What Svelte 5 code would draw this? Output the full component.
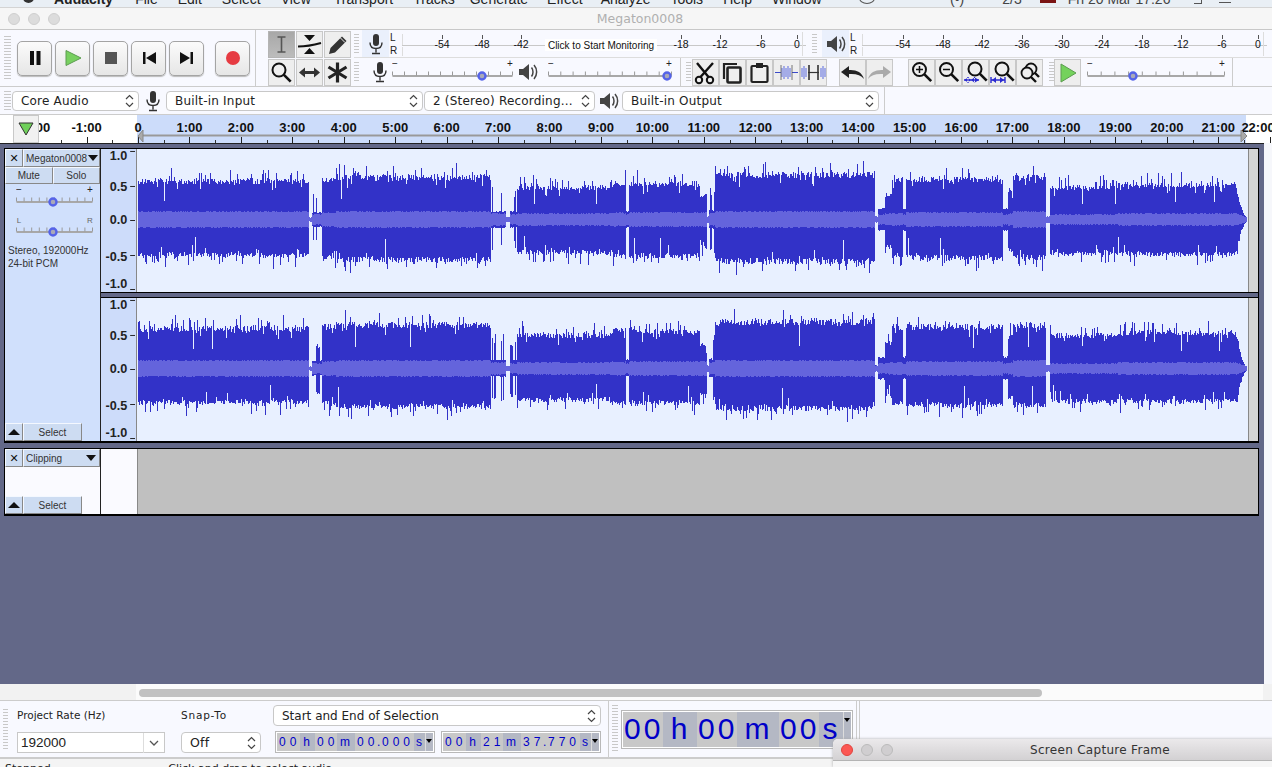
<script lang="ts">
  // seeded so the waveform stays the same between renders
  function rng(seed: number) {
    return () => {
      seed = (seed + 0x6d2b79f5) | 0;
      let t = Math.imul(seed ^ (seed >>> 15), 1 | seed);
      t = (t + Math.imul(t ^ (t >>> 7), 61 | t)) ^ t;
      return ((t ^ (t >>> 14)) >>> 0) / 4294967296;
    };
  }

  // x0, x1, top, bottom, rms, spike
  const segments = [
    [138, 309, 42, 39, 8, 0],
    [309, 312, 1, 1, 2, 0],
    [312, 322, 8, 8, 5, 28],
    [322, 336, 44, 41, 7, 0],
    [336, 491, 46, 44, 8, 0],
    [491, 506, 9, 9, 6, 35],
    [506, 510, 2, 2, 2.5, 0],
    [510, 517, 9, 9, 5, 30],
    [517, 610, 35, 36, 6, 0],
    [610, 626, 40, 40, 6.5, 0],
    [626, 629, 9, 9, 5, 0],
    [629, 700, 39, 40, 7, 0],
    [700, 707, 26, 30, 7, 0],
    [707, 709, 3, 3, 3, 0],
    [709, 715, 10, 10, 6, 35],
    [715, 875, 49, 46, 8, 0],
    [875, 878, 3, 3, 3, 0],
    [878, 885, 12, 12, 5, 0],
    [885, 892, 27, 30, 5.5, 0],
    [892, 903, 44, 40, 6, 0],
    [903, 906, 12, 12, 5, 0],
    [906, 1003, 44, 42, 7, 0],
    [1003, 1008, 12, 12, 5, 0],
    [1008, 1013, 33, 33, 6, 0],
    [1013, 1046, 46, 42, 8, 0],
    [1046, 1050, 3, 3, 3, 0],
    [1050, 1118, 35, 38, 5, 0],
    [1118, 1236, 38, 38, 6, 0]
  ];

  function buildWave(seed: number, topScale: number, botScale: number) {
    const r = rng(seed);
    const c = 70.5;
    let dark = "";
    let light = "";
    const col = (x: number, top: number, bot: number, rms: number) => {
      const px = x - 137 + 0.5;
      dark += `M${px} ${(c - top).toFixed(0)}V${(c + bot).toFixed(0)}`;
      const a = rms * (0.9 + r() * 0.2);
      const b = rms * (0.9 + r() * 0.2);
      light += `M${px} ${(c - a).toFixed(0)}V${(c + b).toFixed(0)}`;
    };
    const jitter = (amp: number) => {
      let v = amp * (0.84 + r() * 0.14);
      const p = r();
      if (amp > 20) {
        if (p < 0.16) v += r() * 12;
        else if (p < 0.24) v -= r() * 9;
        else if (p < 0.246) v = amp * 0.45;
      }
      return v;
    };
    for (const [x0, x1, top, bot, rms, spike] of segments) {
      for (let x = x0; x < x1; x++) {
        let t = jitter(top * topScale);
        let b = jitter(bot * botScale);
        if (spike && r() < 0.3) {
          t = spike * (0.7 + r() * 0.3);
          b = spike * (0.7 + r() * 0.3);
        }
        col(x, t, b, rms);
      }
    }
    for (let x = 1236; x < 1247; x++) {
      const k = (1247 - x) / 11;
      col(x, 36 * k * k * (0.8 + r() * 0.3) + 2, 36 * k * k * (0.8 + r() * 0.3) + 2, 2 + 4 * k);
    }
    return { dark, light };
  }

  const ch1 = buildWave(11, 1, 1);
  const ch2 = buildWave(47, 1.04, 0.95);

  const scale = [
    { t: "1.0", y: 9, tick: 0 },
    { t: "0.5", y: 41, tick: 36 },
    { t: "0.0", y: 75, tick: 71 },
    { t: "-0.5", y: 113, tick: 107 },
    { t: "-1.0", y: 141, tick: 142 }
  ];

  // timeline: 51.44px a minute, zero at x=138
  const minutes = Array.from({ length: 25 }, (_, i) => i - 2);
  const mx = (m: number) => 138 + m * 51.44;
  const labelX = (m: number) => (m === 22 ? 1258 : mx(m));
  const label = (m: number) => (m < 0 ? `-${-m}:00` : m === 0 ? "0" : `${m}:00`);

  const recLabels = [
    ["-54", 442], ["-48", 482], ["-42", 521], ["-18", 681], ["-12", 720], ["-6", 761], ["0", 797]
  ] as [string, number][];
  const playLabels = [
    ["-54", 903], ["-48", 943], ["-42", 982], ["-36", 1022], ["-30", 1062],
    ["-24", 1102], ["-18", 1142], ["-12", 1181], ["-6", 1222], ["0", 1258]
  ] as [string, number][];

  const smallStart = [
    ["00", 23, 1], ["h", 15, 0], ["00", 22, 1], ["m", 18, 0], ["00", 22, 1], [".", 3, 0], ["000", 34, 1], ["s", 11, 0]
  ] as [string, number, number][];
  const smallEnd = [
    ["00", 23, 1], ["h", 15, 0], ["21", 22, 1], ["m", 18, 0], ["37", 22, 1], [".", 3, 0], ["770", 34, 1], ["s", 11, 0]
  ] as [string, number, number][];
  const bigTime = [
    ["00", 40, 1], ["h", 34, 0], ["00", 40, 1], ["m", 42, 0], ["00", 40, 1], ["s", 24, 0]
  ] as [string, number, number][];

  const menus = [
    ["File", 22], ["Edit", 20], ["Select", 20], ["View", 20], ["Transport", 23], ["Tracks", 20],
    ["Generate", 15], ["Effect", 19], ["Analyze", 18], ["Tools", 20], ["Help", 20], ["Window", 20]
  ] as [string, number][];

  const lens = (cx: number, cy: number, r: number) =>
    `<circle cx="${cx}" cy="${cy}" r="${r}" fill="none" stroke="#111" stroke-width="2"/><path d="M${cx + r * 0.72} ${cy + r * 0.72}l7 7" stroke="#111" stroke-width="2.6"/>`;

  const icons: Record<string, string> = {
    ibeam: `<path d="M9.5 6h8M13.5 6v15M9.5 21h8" fill="none" stroke="#555" stroke-width="1.6"/>`,
    envelope: `<path d="M8 4h11l-5.500 6zM8 23h11l-5.500-6z" fill="#111"/><path d="M2 15.500c6 0 14-1 23-3.500" fill="none" stroke="#111" stroke-width="2"/>`,
    pencil: `<path d="M5 23l1.500-6L18 5.500l4.500 4.500L11 21.500z" fill="#333"/><path d="M16.500 7l4.500 4.500" stroke="#eee" stroke-width="1"/>`,
    zoom: lens(11, 11, 6.5),
    shift: `<path d="M3 13.500l6-5v3.500h9V8.500l6 5-6 5V15H9v3.500z" fill="#333"/>`,
    multi: `<path d="M13.500 3.500v20M4.500 8l18 11M22.500 8l-18 11" stroke="#222" stroke-width="3.200"/>`,
    scissors: `<circle cx="7" cy="21" r="3.200" fill="none" stroke="#111" stroke-width="2"/><circle cx="18" cy="21" r="3.200" fill="none" stroke="#111" stroke-width="2"/><path d="M8.500 18L21 4M16.500 18L5 4" stroke="#111" stroke-width="2.400"/>`,
    copy: `<path d="M18 5H5v15" fill="none" stroke="#222" stroke-width="2.200"/><rect x="8.500" y="8.500" width="13" height="15" rx="1" fill="none" stroke="#222" stroke-width="2.600"/>`,
    paste: `<rect x="5.500" y="7" width="16" height="16" rx="1" fill="none" stroke="#222" stroke-width="2.200"/><rect x="10" y="4" width="7" height="5" fill="#222"/>`,
    trim: `<path d="M2 13.500h6M19 13.500h6" stroke="#3a4ac8" stroke-width="1.200"/><path d="M9 9v9M11 7v13M13 9v9M15 7v13M17 9v9" stroke="#5a6ae0" stroke-width="1"/><path d="M8 6v15M19 6v15" stroke="#555" stroke-width=".8"/>`,
    silence: `<path d="M2 9v9M4 7v13M6 9v9M21 9v9M23 7v13M25 9v9" stroke="#5a6ae0" stroke-width="1"/><path d="M8 13.500h11" stroke="#333" stroke-width="1.200"/><path d="M9 6v15M18 6v15" stroke="#333" stroke-width="1.600"/>`,
    undo: `<path d="M2 13l8-6v4c7-.5 13 2 15 9-3-4-8-5.500-15-5v4z" fill="#222"/>`,
    redo: `<path d="M25 13l-8-6v4c-7-.5-13 2-15 9 3-4 8-5.500 15-5v4z" fill="#aaa"/>`,
    zoomIn: lens(11.5, 10.5, 6.5) + `<path d="M8 10.500h7M11.500 7v7" stroke="#111" stroke-width="1.500"/>`,
    zoomOut: lens(11.5, 10.5, 6.5) + `<path d="M8 10.500h7" stroke="#111" stroke-width="1.500"/>`,
    zoomFit: lens(13, 10, 6.5) + `<path d="M2 21h15" stroke="#2a2ad0" stroke-width="1.400"/><path d="M2 21l5-3v6zM9 21l-4-3v6zM9 21l4-3v6zM17 21l-5-3v6z" fill="#2a2ad0"/>`,
    zoomSel: lens(13, 10, 6.5) + `<path d="M2 21h14M2 18v6M16 18v6" stroke="#2a2ad0" stroke-width="1.400"/><path d="M3 21l4-3v6zM15 21l-4-3v6z" fill="#2a2ad0"/>`,
    zoomToggle: `<circle cx="15" cy="10" r="5.500" fill="none" stroke="#111" stroke-width="1.800"/><circle cx="11" cy="14" r="5.500" fill="#eee" stroke="#111" stroke-width="1.800"/><path d="M15 18l5 5M19 14l4 4" stroke="#111" stroke-width="2.400"/>`,
    playGreen: `<path d="M7 5l15 9-15 9z" fill="#74d25c" stroke="#5c9c50"/>`
  };
</script>

{#snippet mic(fill = "#333")}
  <svg class="mic" width="16" height="22" viewBox="0 0 16 22">
    <rect x="5" y="1" width="6" height="12" rx="3" fill={fill} />
    <path d="M2 9.500c0 4 2.500 6 6 6s6-2 6-6M8 15.500v4M4 20.500h8" fill="none" stroke={fill} stroke-width="1.400" />
  </svg>
{/snippet}

{#snippet speaker()}
  <svg class="spk" width="20" height="20" viewBox="0 0 20 20">
    <path d="M1 7h4l6-5v16l-6-5H1z" fill="#444" />
    <path d="M13.500 5.500c2 2.500 2 6.500 0 9M16 3c3.500 4 3.500 10 0 14" fill="none" stroke="#444" stroke-width="1.500" />
  </svg>
{/snippet}

{#snippet grip()}
  <span class="grip"></span>
{/snippet}

{#snippet tool(name: string, on = false)}
  <span class="tool" class:on>
    <svg width="25" height="25" viewBox="1 1 25 25">{@html icons[name]}</svg>
  </span>
{/snippet}

{#snippet slider(w: number, pos: number, lo: string, hi: string, dim = false)}
  <svg class="slider" width={w} height="22" viewBox="0 0 {w} 22">
    <text class:dim x="3" y="7" class="sl-mark" text-anchor="middle">{lo}</text>
    <text class:dim x={w - 3} y="7" class="sl-mark" text-anchor="middle">{hi}</text>
    <path d="M0.500 16h{w - 1}" stroke="#a8a8a8" stroke-width="2" />
    {#each Array.from({ length: 11 }, (_, i) => i) as i}
      <path d="M{0.5 + (i * (w - 1)) / 10} 11.500v4" stroke="#999" />
    {/each}
    <circle cx={pos} cy="16" r="3.500" fill="#a9a9b8" stroke="#5563e8" stroke-width="2.400" />
  </svg>
{/snippet}

{#snippet meter(x0: number, width: number, labels: [string, number][], hint: boolean)}
  <svg class="meter" {width} height="28" viewBox="{x0} 30 {width} 28">
    <path d="M{x0} 45.500h{width}" stroke="#c8c8c8" />
    <path d="M{x0 + 0.5} 34v11M{x0 + 0.5} 47v9" stroke="#ddd" />
    <path d="M{x0 + width - 3.500} 32v24" stroke="#ddd" />
    {#each labels as [t, x]}
      <path d="M{x + 0.5} 35v4" stroke="#555" />
      <text {x} y="48" class="meter-label" text-anchor="middle">{t}</text>
    {/each}
    {#if hint}
      <rect x="545" y="39" width="112" height="12" fill="#fff" />
      <text x="601" y="48.500" class="meter-hint" text-anchor="middle">Click to Start Monitoring</text>
    {/if}
  </svg>
{/snippet}

{#snippet timeField(cells: [string, number, number][], big: boolean)}
  <div class="time" class:big>
    {#each cells as [t, w, lit]}
      <span class="cell" class:lit class:dot={t === "."} style="width:{w}px">{t}</span>
    {/each}
    <span class="time-arrow"><i></i></span>
  </div>
{/snippet}

{#snippet combo(text: string, cls: string)}
  <div class="combo {cls}">
    <span>{text}</span>
    <svg width="9" height="14" viewBox="0 0 9 14"><path d="M1 5l3.500-3.500L8 5M1 9l3.500 3.500L8 9" fill="none" stroke="#444" stroke-width="1.200" /></svg>
  </div>
{/snippet}

{#snippet panelFoot()}
  <div class="panel-foot">
    <span class="pbtn sq"><i class="up"></i></span>
    <span class="pbtn select">Select</span>
  </div>
{/snippet}

{#snippet channel(wave: { dark: string; light: string }, cls: string)}
  <div class="channel {cls}">
    <svg class="vruler" width="36" height="143" viewBox="0 0 36 143">
      {#each scale as s}
        <text x="27" y={s.y} class="vr-label" text-anchor="end">{s.t}</text>
        <path d="M30 {s.tick + 0.5}h5" stroke="#222" />
      {/each}
    </svg>
    <svg class="wave" width="1111" height="143" viewBox="0 0 1111 143" shape-rendering="crispEdges">
      <path d={wave.dark} stroke="#3232c8" fill="none" />
      <path d={wave.light} stroke="#6464dc" fill="none" />
    </svg>
    <div class="strip"></div>
  </div>
{/snippet}

<div class="app">
  <div class="menubar">
    <span class="apple"></span>
    <b>Audacity</b>
    {#each menus as [m, gap]}
      <span style="margin-left:{gap}px">{m}</span>
    {/each}
    <span class="menu-right">
      <i class="clock"></i>
      <span class="m-vol">(•)</span>
      <span class="m-bat">2/3</span>
      <i class="flag"></i>
      <span class="m-date">Fri 20 Mar 17:26</span>
      <i class="m-search"></i>
      <i class="m-list"></i>
    </span>
  </div>

  <div class="titlebar">
    <span class="light"></span><span class="light"></span><span class="light"></span>
    <span class="title">Megaton0008</span>
  </div>

  <div class="toolbars">
    <div class="transport">
      {@render grip()}
      <div class="tbtn"><svg width="20" height="20" viewBox="0 0 20 20"><path d="M5 3h4v14H5zM11.500 3h4v14h-4z" fill="#111" /></svg></div>
      <div class="tbtn"><svg width="20" height="20" viewBox="0 0 20 20"><path d="M3 2.500l15 7.500-15 7.500z" fill="#78d060" stroke="#5c9c50" /></svg></div>
      <div class="tbtn"><svg width="20" height="20" viewBox="0 0 20 20"><rect x="4" y="4" width="12" height="12" fill="#555" /></svg></div>
      <div class="tbtn"><svg width="20" height="20" viewBox="0 0 20 20"><path d="M4 4h2.500v12H4zM17 4v12L7 10z" fill="#111" /></svg></div>
      <div class="tbtn"><svg width="20" height="20" viewBox="0 0 20 20"><path d="M3 4l10 6-10 6zM13.500 4H16v12h-2.500z" fill="#111" /></svg></div>
      <div class="tbtn rec"><svg width="20" height="20" viewBox="0 0 20 20"><circle cx="10" cy="10" r="7" fill="#e63b42" /></svg></div>
    </div>

    <div class="tools">
      {@render tool("ibeam", true)}
      {@render tool("envelope")}
      {@render tool("pencil")}
      {@render tool("zoom")}
      {@render tool("shift")}
      {@render tool("multi")}
    </div>

    <div class="bars">
      <div class="bar-row top">
        {@render grip()}
        <span class="meter-btn on">{@render mic()}</span>
        <span class="lr"><b>L</b><b>R</b></span>
        {@render meter(402, 404, recLabels, true)}
        {@render grip()}
        <span class="meter-btn second">{@render speaker()}</span>
        <span class="lr"><b>L</b><b>R</b></span>
        {@render meter(862, 405, playLabels, false)}
      </div>
      <div class="bar-row">
        {@render grip()}
        <span class="mix-icon">{@render mic()}</span>
        <span class="sl-a">{@render slider(121, 90, "−", "+")}</span>
        <span class="mix-icon spk-gap">{@render speaker()}</span>
        <span class="sl-b">{@render slider(124, 119, "−", "+")}</span>
        <span class="sep"></span>
        {@render grip()}
        <div class="group">
          {@render tool("scissors")}
          {@render tool("copy")}
          {@render tool("paste")}
          {@render tool("trim")}
          {@render tool("silence")}
        </div>
        <div class="group undo">
          {@render tool("undo")}
          {@render tool("redo")}
        </div>
        <div class="group zooms">
          {@render tool("zoomIn")}
          {@render tool("zoomOut")}
          {@render tool("zoomFit")}
          {@render tool("zoomSel")}
          {@render tool("zoomToggle")}
        </div>
        {@render grip()}
        {@render tool("playGreen")}
        <span class="sl-c">{@render slider(138, 46, "−", "+")}</span>
        <span class="sep end"></span>
      </div>
    </div>
  </div>

  <div class="devices">
    {@render grip()}
    {@render combo("Core Audio", "host")}
    <span class="dev-icon">{@render mic()}</span>
    {@render combo("Built-in Input", "input")}
    {@render combo("2 (Stereo) Recording...", "chans")}
    <span class="dev-icon">{@render speaker()}</span>
    {@render combo("Built-in Output", "output")}
    <span class="sep dev-end"></span>
  </div>

  <div class="timeline">
    <svg width="1272" height="28" viewBox="0 0 1272 28">
      <rect x="137" y="0" width="1109" height="28" fill="#ccdcfa" />
      {#each minutes as m}
        <text x={labelX(m)} y="17" class="tl-label" text-anchor="middle">{label(m)}</text>
        <path d="M{Math.round(mx(m)) + 0.5} 22v6" stroke="#222" />
        <path d="M{Math.round(mx(m) + 25.7) + 0.5} 25v3" stroke="#333" />
      {/each}
      <path d="M142 20.500h1100" stroke="#999" stroke-width="2" />
      <path d="M143 15v12l-5-6zM1241 15v12l6-6z" fill="#aaa" stroke="#888" />
    </svg>
    <span class="pin">
      <svg width="16" height="14" viewBox="0 0 16 14"><path d="M1 1h14L8 13z" fill="#6fd05a" stroke="#333" /></svg>
    </span>
  </div>

  <div class="tracks">
    <div class="track audio">
      <div class="panel">
        <div class="panel-head">
          <span class="pbtn sq x">✕</span>
          <span class="pbtn name"><span>Megaton0008</span><i></i></span>
        </div>
        <div class="panel-head ms">
          <span class="pbtn half">Mute</span>
          <span class="pbtn half">Solo</span>
        </div>
        <div class="pslider first">{@render slider(77, 37, "−", "+")}</div>
        <div class="pslider">{@render slider(77, 37, "L", "R", true)}</div>
        <p class="info">Stereo, 192000Hz<br />24-bit PCM</p>
        {@render panelFoot()}
      </div>
      <div class="channels">
        {@render channel(ch1, "ch-a")}
        <div class="gap"></div>
        {@render channel(ch2, "ch-b")}
      </div>
    </div>

    <div class="track label">
      <div class="panel">
        <div class="panel-head">
          <span class="pbtn sq x">✕</span>
          <span class="pbtn name wide"><span>Clipping</span><i></i></span>
        </div>
        {@render panelFoot()}
      </div>
      <div class="label-ruler"></div>
      <div class="label-body"></div>
    </div>
  </div>

  <div class="hscroll">
    <div class="hs-track"><span class="thumb"></span></div>
  </div>

  <div class="selection">
    {@render grip()}
    <div class="rate">
      <label for="rate">Project Rate (Hz)</label>
      <div class="rate-box" id="rate">
        <span>192000</span>
        <svg width="20" height="20" viewBox="0 0 20 20"><path d="M6 8l4 4 4-4" fill="none" stroke="#555" stroke-width="1.300" /></svg>
      </div>
    </div>
    <div class="snap">
      <span class="snap-label">Snap-To</span>
      {@render combo("Off", "snap-box")}
    </div>
    <div class="sel-fields">
      {@render combo("Start and End of Selection", "sel-mode")}
      <div class="sel-times">
        {@render timeField(smallStart, false)}
        {@render timeField(smallEnd, false)}
      </div>
    </div>
    <span class="sep sel-sep"></span>
    {@render grip()}
    {@render timeField(bigTime, true)}
    <span class="sep sel-sep2"></span>
    <span class="sep sel-sep3"></span>
  </div>

  <div class="status">
    <span>Stopped.</span>
    <span class="hint">Click and drag to select audio</span>
  </div>

  <div class="capture">
    <div class="capture-bar">
      <span class="light red"></span><span class="light"></span><span class="light"></span>
      <span class="capture-title">Screen Capture Frame</span>
    </div>
  </div>
</div>

<style>
  :global(body) {
    margin: 0;
    background: #f6f7fb;
  }

  .app {
    position: relative;
    width: 1272px;
    height: 767px;
    overflow: hidden;
    font-family: "DejaVu Sans", sans-serif;
    color: #222;
  }

  .grip {
    flex: none;
    width: 7px;
    height: 20px;
    margin: 0 4px;
    background: repeating-linear-gradient(to bottom, #c8c8c8 0 1px, transparent 1px 3px);
  }

  .sep {
    flex: none;
    width: 1px;
    align-self: stretch;
    background: #ccc;
  }

  /* menu bar, only the bottom of the letters is on screen */
  .menubar {
    height: 7px;
    padding-left: 54px;
    display: flex;
    align-items: flex-end;
    background: #e9eff5;
    font: 14px/14px "Liberation Sans", sans-serif;
    color: #222;
    overflow: hidden;
    white-space: nowrap;
  }

  .menubar b,
  .menubar span {
    position: relative;
    top: -1px;
    flex: none;
  }

  .apple {
    position: absolute !important;
    left: 23px;
    top: -7px !important;
    width: 11px;
    height: 10px;
    border-radius: 50%;
    background: #333;
  }

  .menu-right {
    position: absolute !important;
    left: 859px;
    top: -8px !important;
    display: flex;
    align-items: flex-start;
    color: #444;
  }

  .menu-right span {
    top: 0;
  }

  .clock {
    width: 16px;
    height: 12px;
    border: 1.500px solid #555;
    border-radius: 50%;
    box-sizing: border-box;
  }

  .m-vol {
    margin-left: 75px;
  }

  .m-bat {
    margin-left: 38px;
  }

  .flag {
    width: 16px;
    height: 3px;
    margin: 8px 0 0 18px;
    background: #7a1414;
  }

  .m-date {
    margin-left: 12px;
  }

  .m-search {
    width: 8px;
    height: 12px;
    margin-left: 24px;
    border-right: 1.500px solid #555;
    border-bottom: 1.500px solid #555;
    box-sizing: border-box;
  }

  .m-list {
    width: 12px;
    height: 11px;
    margin-left: 17px;
    border-bottom: 1.500px solid #555;
    box-sizing: border-box;
  }

  .titlebar {
    height: 23px;
    box-sizing: border-box;
    display: flex;
    align-items: center;
    gap: 8px;
    padding-left: 8px;
    background: #f6f6f6;
    border-top: 1px solid #d4d4d4;
    border-bottom: 1px solid #c8c8c8;
    position: relative;
  }

  .light {
    width: 12px;
    height: 12px;
    border-radius: 50%;
    background: #dcdcdc;
    border: 0.5px solid #cfcfcf;
    box-sizing: border-box;
  }

  .title {
    position: absolute;
    left: 8px;
    right: 0;
    text-align: center;
    font-size: 12.500px;
    color: #b0b0b0;
  }

  .toolbars {
    height: 56px;
    display: flex;
    background: #f8f9ff;
    border-bottom: 1px solid #ccc;
  }

  .transport {
    width: 256px;
    flex: none;
    display: flex;
    align-items: center;
    border-right: 1px solid #ccc;
    box-sizing: border-box;
    position: relative;
  }

  .transport .grip {
    height: 44px;
    margin: 0 6px 0 4px;
  }

  .tbtn {
    width: 35px;
    height: 35px;
    margin-right: 3px;
    box-sizing: border-box;
    flex: none;
    display: flex;
    align-items: center;
    justify-content: center;
    border: 1px solid #a4a4a4;
    border-radius: 5px;
    background: linear-gradient(#fbfbfb, #e6e6e6);
    box-shadow: 0 1px 1px #bbb;
  }

  .tbtn.rec {
    margin-left: 8px;
  }

  .tools {
    flex: none;
    width: 84px;
    margin-left: 12px;
    display: flex;
    flex-wrap: wrap;
    gap: 1px 1px;
    align-content: center;
  }

  .tool {
    flex: none;
    width: 27px;
    height: 27px;
    box-sizing: border-box;
    display: flex;
    align-items: center;
    justify-content: center;
    border: 1px solid #c8c8c8;
    background: #eeeeee;
  }

  .tool.on {
    background: linear-gradient(#a8a8a8, #bcbcbc);
    border-color: #b4b4b4;
  }

  .bars {
    flex: 1;
    min-width: 0;
    display: flex;
    flex-direction: column;
    margin-left: 2px;
  }

  .bar-row {
    height: 28px;
    display: flex;
    align-items: center;
  }

  .bar-row.top {
    height: 28px;
    border-bottom: 1px solid #ddd;
    box-sizing: border-box;
  }

  .bar-row .grip {
    margin: 0;
    width: 5px;
  }

  .meter-btn {
    flex: none;
    width: 27px;
    height: 27px;
    margin-left: 3px;
    display: flex;
    align-items: center;
    justify-content: center;
  }

  .meter-btn.on {
    background: #eaf0fc;
  }

  .meter-btn.second {
    margin-left: 4px;
    background: #eaf0fc;
  }

  .lr {
    flex: none;
    width: 12px;
    padding-left: 1px;
    display: flex;
    flex-direction: column;
    font: 10px/13px "Liberation Sans", sans-serif;
  }

  .lr b {
    font-weight: 400;
  }

  .meter {
    flex: none;
    display: block;
  }

  .bar-row .meter + .grip {
    margin-left: 6px;
    margin-right: 1px;
  }

  .meter-label {
    font: 10.500px "Liberation Sans", sans-serif;
    fill: #111;
  }

  .meter-hint {
    font: 10px "Liberation Sans", sans-serif;
    fill: #111;
  }

  .mix-icon {
    flex: none;
    margin-left: 13px;
    display: flex;
  }

  .mix-icon.spk-gap {
    margin-left: 5px;
  }

  .sl-a {
    margin: -2px 0 0 4px;
    display: flex;
  }

  .sl-b {
    margin: -2px 0 0 10px;
    display: flex;
  }

  .sl-c {
    margin: -2px 0 0 6px;
    display: flex;
  }

  .bar-row .sep {
    margin: 0 5px 0 8px;
  }

  .bar-row .sep.end {
    margin-left: 7px;
  }

  .group {
    flex: none;
    display: flex;
    margin-left: 1px;
  }

  .group.undo {
    margin-left: 12px;
  }

  .group.zooms {
    margin: 0 6px 0 15px;
  }

  .slider {
    flex: none;
    display: block;
  }

  .sl-mark {
    font: 10px "Liberation Sans", sans-serif;
    fill: #222;
  }

  .sl-mark.dim {
    font-size: 8px;
    fill: #666;
  }

  .devices {
    height: 28px;
    display: flex;
    align-items: center;
    background: #f8f9ff;
    border-bottom: 1px solid #ccc;
    box-sizing: border-box;
  }

  .devices > .grip {
    margin: 0 1px 0 4px;
    width: 7px;
  }

  .combo {
    flex: none;
    height: 20px;
    box-sizing: border-box;
    display: flex;
    align-items: center;
    justify-content: space-between;
    padding: 0 4px 0 8px;
    border: 1px solid #c8c8c8;
    border-radius: 4px;
    background: #fff;
    font-size: 12px;
    letter-spacing: 0.2px;
    color: #222;
    white-space: nowrap;
  }

  .combo.host {
    width: 127px;
  }

  .combo.input {
    width: 257px;
  }

  .combo.chans {
    width: 171px;
    margin-left: 1px;
  }

  .combo.output {
    width: 257px;
  }

  .dev-icon {
    flex: none;
    width: 27px;
    display: flex;
    justify-content: center;
  }

  .sep.dev-end {
    margin-left: 5px;
  }

  .timeline {
    height: 28px;
    position: relative;
    background: #fff;
  }

  .timeline svg {
    display: block;
  }

  .tl-label {
    font: 700 13px "Liberation Sans", sans-serif;
    fill: #111;
  }

  .pin {
    position: absolute;
    left: 13px;
    top: 0;
    width: 26px;
    height: 28px;
    box-sizing: border-box;
    display: flex;
    align-items: center;
    justify-content: center;
    background: #f1f1f1;
    border: 1px solid #c8c8c8;
  }

  .tracks {
    height: 541px;
    width: 1264px;
    box-sizing: border-box;
    padding: 4px 0 0 4px;
    background: #636888;
    border-top: 1px solid #222;
  }

  .track {
    width: 1255px;
    box-sizing: border-box;
    display: flex;
    border: 1px solid #000;
    border-width: 1px 1px 2px 1px;
  }

  .panel {
    flex: none;
    width: 95px;
    border-right: 1px solid #222;
    display: flex;
    flex-direction: column;
    font: 10px "Liberation Sans", sans-serif;
    color: #333;
  }

  .track.audio {
    height: 295px;
  }

  .track.audio .panel {
    background: #d0e0fc;
  }

  .track.label {
    height: 68px;
    margin-top: 5px;
  }

  .track.label .panel {
    background: #fafaff;
  }

  .panel-head {
    display: flex;
    height: 18px;
    flex: none;
  }

  .pbtn {
    box-sizing: border-box;
    display: flex;
    align-items: center;
    justify-content: center;
    background: #cddcf2;
    border: 1px solid;
    border-color: #f4f8ff #888 #888 #f4f8ff;
  }

  .pbtn.sq {
    width: 18px;
    flex: none;
  }

  .pbtn.x {
    font: 700 11px "DejaVu Sans", sans-serif;
    color: #111;
  }

  .pbtn.name {
    flex: 1;
    justify-content: space-between;
    padding: 0 1px 0 2px;
    min-width: 0;
    white-space: nowrap;
  }

  .pbtn.name.wide {
    padding-right: 2px;
  }

  .pbtn.name i {
    flex: none;
    width: 0;
    height: 0;
    margin-left: -2px;
    border: 5.500px solid transparent;
    border-top: 6px solid #111;
    border-bottom: 0;
  }

  .pbtn.name.wide i {
    margin-right: 1px;
  }

  .pbtn.half {
    flex: 1;
  }

  .panel-head.ms {
    height: 17px;
  }

  .pslider {
    margin: 0 0 0 11px;
    height: 22px;
  }

  .pslider.first {
    margin-top: 2px;
  }

  .pslider + .pslider {
    margin-top: 8px;
  }

  .info {
    margin: 6px 0 0 3px;
    font: 10px/13px "Liberation Sans", sans-serif;
    color: #333;
  }

  .panel-foot {
    margin-top: auto;
    display: flex;
    height: 18px;
  }

  .pbtn .up {
    width: 0;
    height: 0;
    border: 6px solid transparent;
    border-bottom: 6px solid #111;
    border-top: 0;
  }

  .pbtn.select {
    width: 59px;
  }

  .channels {
    flex: 1;
    min-width: 0;
    display: flex;
    flex-direction: column;
  }

  .channel {
    height: 143px;
    display: flex;
    flex: none;
    background: #e8f0ff;
  }

  .gap {
    height: 6px;
    flex: none;
    box-sizing: border-box;
    background: #636888;
    border-top: 1px solid #000;
    border-bottom: 1px solid #000;
  }

  .vruler {
    flex: none;
    display: block;
    background: #cddcfa;
    border-right: 1px solid #888;
    box-sizing: content-box;
    width: 35px;
  }

  .vr-label {
    font: 700 13px "Liberation Sans", sans-serif;
    fill: #222;
  }

  .wave {
    flex: none;
    display: block;
  }

  .strip {
    flex: 1;
    background: #d4d4d4;
    border-left: 1px solid #888;
  }

  .label-ruler {
    flex: none;
    width: 36px;
    background: #fafaff;
    border-right: 1px solid #888;
  }

  .label-body {
    flex: 1;
    background: #c0c0c0;
  }

  .hscroll {
    height: 16px;
    padding-left: 136px;
    background: #f2f2f2;
  }

  .hs-track {
    width: 1127px;
    height: 16px;
    box-sizing: border-box;
    padding: 5px 3px;
    background: #fbfbfb;
  }

  .thumb {
    display: block;
    width: 903px;
    height: 8px;
    border-radius: 4px;
    background: #c1c1c1;
  }

  .selection {
    height: 59px;
    box-sizing: border-box;
    display: flex;
    align-items: center;
    background: #f8f9ff;
    border-top: 1px solid #ccc;
    border-bottom: 2px solid #ccc;
  }

  .selection > .grip {
    height: 40px;
    margin: 0 9px 0 3px;
    width: 5px;
  }

  .rate {
    flex: none;
    width: 164px;
    font-size: 10.500px;
  }

  .rate label {
    display: block;
    height: 27px;
    padding-top: 4px;
    box-sizing: border-box;
  }

  .rate-box {
    width: 148px;
    height: 21px;
    box-sizing: border-box;
    display: flex;
    align-items: center;
    justify-content: space-between;
    padding-left: 3px;
    border: 1px solid #c8c8c8;
    background: #fff;
    font: 13.500px "Liberation Sans", sans-serif;
  }

  .rate-box svg {
    border-left: 1px solid #ddd;
  }

  .snap {
    flex: none;
    width: 92px;
    font-size: 10.500px;
  }

  .snap-label {
    display: block;
    height: 27px;
    padding-top: 4px;
    box-sizing: border-box;
    letter-spacing: 0.8px;
  }

  .combo.snap-box {
    width: 80px;
    height: 21px;
    padding-left: 8px;
    font-size: 12.500px;
  }

  .sel-fields {
    flex: none;
    width: 330px;
    display: flex;
    flex-direction: column;
    gap: 5px;
  }

  .combo.sel-mode {
    width: 328px;
    height: 21px;
    font-size: 12px;
    letter-spacing: 0;
  }

  .sel-times {
    display: flex;
    gap: 6px;
    margin-left: 2px;
  }

  .time {
    flex: none;
    height: 22px;
    box-sizing: border-box;
    padding: 1px;
    display: flex;
    border: 1px solid #b8b8b8;
    background: #fff;
    font: 12px/18px "Liberation Sans", sans-serif;
    color: #0000c8;
  }

  .cell {
    flex: none;
    text-align: center;
    letter-spacing: 4px;
    background: #b4b8c4;
    text-indent: 2px;
  }

  .cell.lit {
    background: #c8c8c8;
  }

  .cell.dot {
    letter-spacing: 0;
    text-indent: 0;
    background: #c8c8c8;
  }

  .time-arrow {
    flex: none;
    width: 8px;
    background: #b4b8c4;
    position: relative;
    border-left: 1px solid #ddd;
    box-sizing: border-box;
  }

  .time-arrow i {
    position: absolute;
    left: 0;
    top: 6px;
    border: 3.500px solid transparent;
    border-top: 4px solid #000;
    border-bottom: 0;
  }

  .time.big {
    height: 39px;
    font-size: 30px;
    line-height: 34px;
  }

  .time.big .cell {
    letter-spacing: 3px;
    text-indent: 1px;
  }

  .sep.sel-sep {
    margin-left: 5px;
  }

  .selection > .sep.sel-sep ~ .grip {
    margin: 0 3px 0 3px;
    width: 6px;
    height: 48px;
  }

  .sep.sel-sep2 {
    margin-left: 3px;
  }

  .sep.sel-sep3 {
    margin-left: 2px;
  }

  .status {
    height: 7px;
    padding: 3px 0 0 5px;
    display: flex;
    background: #f4f4f4;
    font: 11px "DejaVu Sans", sans-serif;
    white-space: nowrap;
  }

  .hint {
    margin-left: 114px;
  }

  /* another app's window lying over the bottom corner */
  .capture {
    position: absolute;
    left: 833px;
    top: 739px;
    width: 440px;
    height: 28px;
    border-radius: 5px 0 0 0;
    background: #f6f6f6;
    box-shadow: 0 0 3px #aaa;
  }

  .capture-bar {
    position: relative;
    height: 21px;
    display: flex;
    align-items: center;
    gap: 8px;
    padding-left: 8px;
    border-radius: 5px 0 0 0;
    background: linear-gradient(#ebe9eb, #d3d1d3);
    border-bottom: 1px solid #b4b4b4;
  }

  .capture-bar .light {
    background: #d0ced0;
    border-color: #bbb;
  }

  .capture-bar .light.red {
    background: #fc5753;
    border-color: #e0443e;
  }

  .capture-title {
    position: absolute;
    left: 0;
    right: 0;
    text-align: center;
    font-size: 12px;
    color: #333;
    padding-left: 94px;
    box-sizing: border-box;
    letter-spacing: 0.3px;
  }
</style>
